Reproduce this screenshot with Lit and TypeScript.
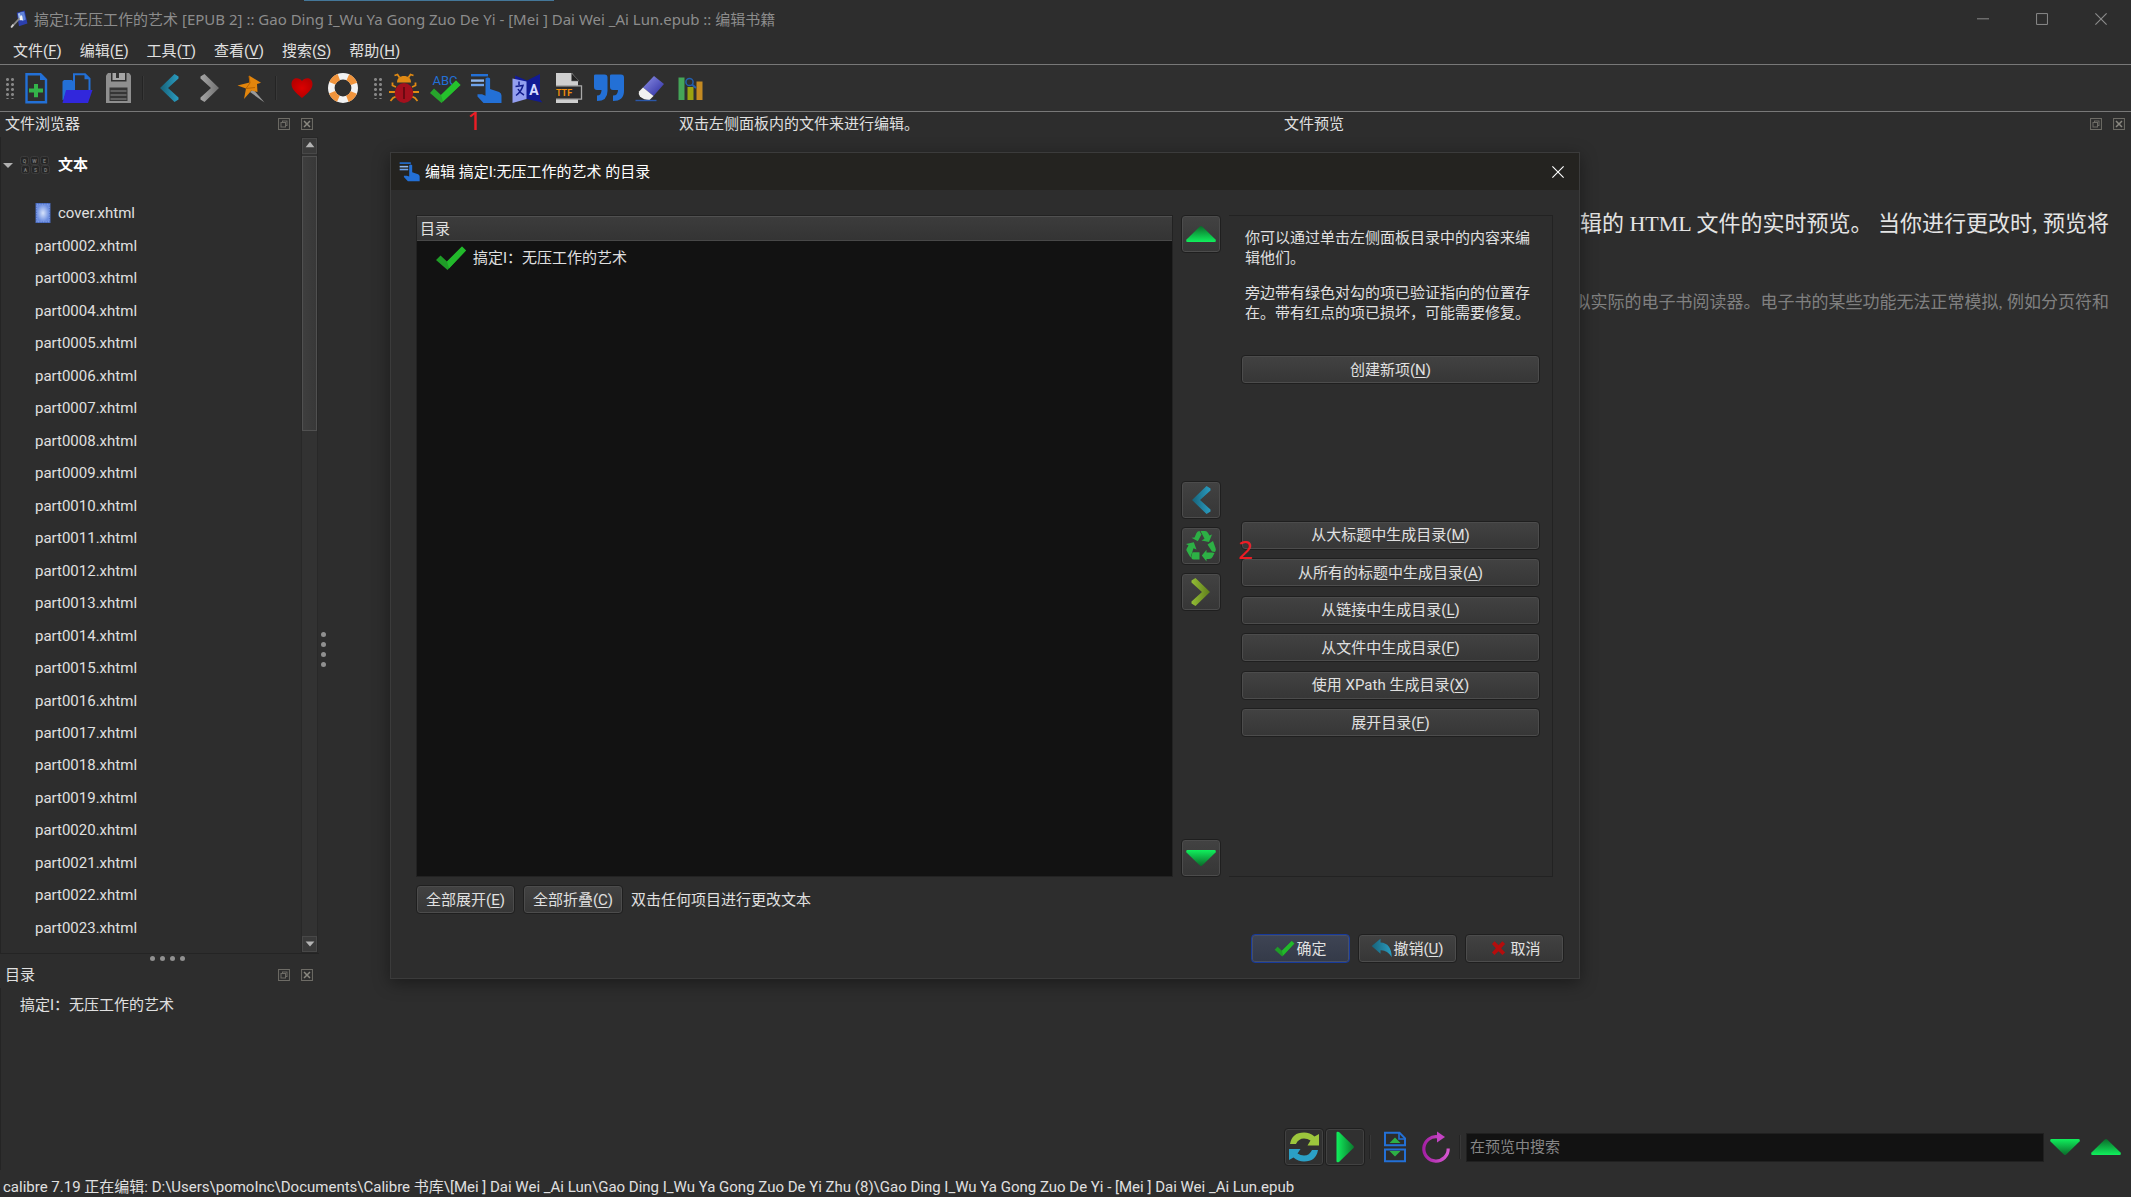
import { LitElement, html, svg, css, nothing, type TemplateResult } from "lit";
import { customElement, property, state } from "lit/decorators.js";
import { classMap } from "lit/directives/class-map.js";

const tocBars = svg`
  <g stroke-width="2.4"><path d="M1 3.2H18" stroke="#2370d6"/><path d="M1 8.6H14" stroke="#8fb6ec"/><path d="M1 13H14" stroke="#6ea2ea"/></g>
  <path d="M15.5 6.6a3 3 0 0 1 4.6 0V17l9 3q2.400 1 2.400 3.500V31H13.500L7.500 24.500v-2.200h4.500l3.500 1.500Z" fill="#2370d6"/>`;

const icons: Record<string, TemplateResult> = {
  newFile: svg`<path d="M6.500 2.200H20.500L26 7.700V30.300H6.500Z" fill="none" stroke="#2370d6" stroke-width="2.400"/><path d="M20 1.500V8h7Z" fill="#2370d6"/><path d="M14 12h4v4.600h5v4h-5v4.600h-4v-4.600H9v-4h5Z" fill="#34b44a"/>`,
  open: svg`<path d="M1.500 9.500L3 8h8l1.500 2v8H6L2.500 28H1.500Z" fill="#2370d6"/><path d="M13 18V2.200h11l4.500 4.500V18" fill="none" stroke="#2370d6" stroke-width="2"/><path d="M23.500 1.500V7.200h5.500Z" fill="#2370d6"/><path d="M5 18h26.500L27 31H1.500Z" fill="#3127dc"/>`,
  save: svg`<path d="M4 3.500L6 1H27L29 3.500V31H4Z" fill="#8f8f8f"/><path d="M9 1h15.500v8.500H9Z" fill="#2f2f2f"/><path d="M10.500 1H23v7H10.500Z" fill="#a6a6a6"/><path d="M14 1h3v5h-3Z" fill="#333"/><path d="M7.500 15.500h18V29h-18Z" fill="#353535"/><path d="M8.500 19h16M8.500 23h16M8.500 27h16" stroke="#8a8a8a" stroke-width="1.200"/>`,
  back: svg`<defs><linearGradient id="gb"><stop offset="0" stop-color="#176279"/><stop offset="1" stop-color="#2a9cc0"/></linearGradient></defs><path d="M21.500 2L25.500 4.500V6.500L15 16L25.500 25.500V27.500L21.500 30L7 16Z" fill="url(#gb)"/>`,
  forward: svg`<defs><linearGradient id="gf"><stop offset="0" stop-color="#a6a6a6"/><stop offset="1" stop-color="#707070"/></linearGradient></defs><path d="M10.500 2L6.500 4.500V6.500L17 16L6.500 25.500V27.500L10.500 30L25 16Z" fill="url(#gf)"/>`,
  next: svg`<defs><linearGradient id="gn"><stop offset="0" stop-color="#93bd35"/><stop offset="1" stop-color="#5f7d1c"/></linearGradient></defs><path d="M10.500 2L6.500 4.500V6.500L17 16L6.500 25.500V27.500L10.500 30L25 16Z" fill="url(#gn)"/>`,
  pin: svg`<path d="M18 17L29.500 30.500L15 20Z" fill="#9a9a9a"/><path d="M14 3.500L26 10.800L22 12L22.500 20L16.500 18.500L9 27L11 16.500L2.500 13.500L14.500 10.500Z" fill="#e2850c"/><path d="M14 4L15 11L11 16.500L20 15.500" fill="none" stroke="#b96400" stroke-width="1"/>`,
  heart: svg`<defs><radialGradient id="gh"><stop offset="0" stop-color="#dd0000"/><stop offset="1" stop-color="#b80000"/></radialGradient></defs><path d="M16 26C9.500 20.500 5.500 17 5.500 12C5.500 5.500 13 4.500 16 9C19 4.500 26.500 5.500 26.500 12C26.500 17 22.500 20.500 16 26Z" fill="url(#gh)"/>`,
  buoy: svg`<circle cx="16" cy="16" r="11.700" fill="none" stroke="#f2f2f2" stroke-width="6.600"/><circle cx="16" cy="16" r="11.700" fill="none" stroke="#f0943c" stroke-width="6.600" stroke-dasharray="9.190 9.190" stroke-dashoffset="-4.600"/>`,
  bug: svg`<g stroke="#e08a14" stroke-width="1.800" fill="none"><path d="M11.500 5.500L9.500 2.500L6.500 3.500M20.500 5.500L22.500 2.500L25.500 3.500M8 15L4.500 13.500V10.500M24 15L27.500 13.500V10.500M7 20H1M25 20h6M8 24.500L5 26L2.500 29M24 24.500L27 26L29.500 29"/></g><path d="M9 10.500C9 6 12 4 16 4s7 2 7 6.500Z" fill="#e08a14"/><ellipse cx="16" cy="21" rx="9.300" ry="10" fill="#a3101d"/><path d="M16 15v12" stroke="#5c0810" stroke-width="1.600"/>`,
  spell: svg`<text x="16" y="13" text-anchor="middle" font-size="13" font-family="Roboto, sans-serif" fill="#2370d6">ABC</text><path d="M1 21L5 16.500L12 23L27 8.500L31.500 13L12.500 31Z" fill="#27a52c"/><path d="M12 23L27 8.500L31.500 13L14 29.500Z" fill="#25c22c"/>`,
  toc: tocBars,
  translate: svg`<path d="M4 3.500L16 8.500L29 2V27.500L31.500 30.500L16 27L4 27Z" fill="#111a94"/><path d="M1.500 6.500L15.500 9.500V27L1.500 31Z" fill="#939ef0"/><path d="M8 9.500V13M4.500 14.500L12 13.500Q10 20 5 23.500M7 17Q9 21 13 23" fill="none" stroke="#121c8c" stroke-width="1.500"/><text x="23" y="23" text-anchor="middle" font-size="14" font-weight="700" font-family="Roboto, sans-serif" fill="#d6daff">A</text>`,
  ttf: svg`<path d="M4 1H20L26 9V14H4ZM4 27H26V31H4Z" fill="#cfcfcf"/><path d="M19.500 1L27 9H19.500Z" fill="#222" stroke="#777" stroke-width=".6"/><path d="M4 13.800H29.500V27.200H4" fill="#2b2b2b" stroke="#a9a9a9" stroke-width="1.300"/><text x="12" y="24" text-anchor="middle" font-size="9" font-weight="700" font-family="Roboto, sans-serif" fill="#ef8d0c">TTF</text>`,
  quote: svg`<path d="M1 3.500Q1 2.500 2.500 2.500H11.500Q14.500 2.500 14.500 5.500V19Q14.500 29 4 29V23.500Q8.500 23.500 8.500 18H4Q1 18 1 15Z" fill="#2370d6"/><path d="M17 3.500Q17 2.500 18.500 2.500H28Q31 2.500 31 5.500V19Q31 29 20 29V23.500Q25 23.500 25 18H20Q17 18 17 15Z" fill="#2370d6"/>`,
  eraser: svg`<defs><linearGradient id="ge" x1="0" y1="0" x2="1" y2="1"><stop offset="0" stop-color="#8d90e6"/><stop offset="1" stop-color="#2a2aa0"/></linearGradient></defs><path d="M20 4L30 12L19.500 24L9 15.500Z" fill="url(#ge)"/><path d="M9 15.500L19.500 24L15.500 28Q10 28 6 24.500Q4 22 5 19.500Z" fill="#f1f1f1"/><path d="M1.500 28.500h21" stroke="#2b57a8" stroke-width="1.400"/>`,
  chart: svg`<path d="M3.500 5.500h6V28h-6Z" fill="#45a558"/><path d="M12.500 15h6V28h-6Z" fill="#9aa310"/><path d="M21.500 9.500h6V28h-6Z" fill="#c48a22"/><circle cx="14.500" cy="10" r="3.600" fill="none" stroke="#235fae" stroke-width="1.500"/><path d="M17 12.500L21 16" stroke="#235fae" stroke-width="2"/>`,
  up: svg`<defs><linearGradient id="gu" x1="0" y1="0" x2="0" y2="1"><stop offset="0" stop-color="#0b6a2a"/><stop offset="1" stop-color="#10f05c"/></linearGradient></defs><path d="M14.800 8.500Q16 7.500 17.200 8.500L30.500 21.500Q31.500 24 29.500 24H2.500Q.5 24 1.500 21.500Z" fill="url(#gu)"/>`,
  down: svg`<defs><linearGradient id="gd" x1="0" y1="1" x2="0" y2="0"><stop offset="0" stop-color="#0b6a2a"/><stop offset="1" stop-color="#10f05c"/></linearGradient></defs><path d="M14.800 23.500Q16 24.500 17.200 23.500L30.500 10.500Q31.500 8 29.500 8H2.500Q.5 8 1.500 10.500Z" fill="url(#gd)"/>`,
  recycle: svg`<g fill="#2db045"><path d="M11.500 3Q12.500 1 14.500 1L16.500 4.500L12.800 11.200L6.500 7.800L9.500 7.500Z"/><path d="M15.500 1H20Q22 1 23 3L24.500 5.500L27 4.500L24 12L16.500 10.500L19.500 8.800Z"/><path d="M22.500 14.500L28 11L30.500 18Q31.500 20 30 22L27 21.500Z"/><path d="M29.500 23L27.500 27Q26.500 29 24 29H21.500V31.500L16.800 25.500L21.500 19.800V22.500H27Z"/><path d="M14.500 22.300V29.500H8.500Q6.500 29.500 6.200 27L7.500 22.300Z"/><path d="M5.500 27.500L1.500 20.500Q1 19.500 2 18L3.500 15.500L1 14L8.800 12.300L11.500 19.500L8.500 18.300Z"/></g>`,
  refresh: svg`<path d="M2 13Q4 1.500 16 1.500Q22 1.500 26.500 5.500L31 3V14.500H19.500L22.500 9.500Q19.500 7.500 16 7.500Q10.500 7.500 8 13Z" fill="#9cc63c"/><path d="M30 19Q28 30.500 16 30.500Q10 30.500 5.500 26.500L1 29V18H12.500L9.500 22.500Q12.500 24.500 16 24.500Q21.500 24.500 24 19Z" fill="#2ba0c6"/>`,
  play: svg`<defs><linearGradient id="gp"><stop offset="0" stop-color="#10f05c"/><stop offset="1" stop-color="#0b7a2e"/></linearGradient></defs><path d="M7.500 2Q7.500 0 10 1L24.500 15Q25.500 16 24.500 17L10 31Q7.500 32 7.500 30Z" fill="url(#gp)"/>`,
  split: svg`<path d="M6 1.800H20.500L26 7.300V14.200H6ZM6 18.500H26V30.300H6Z" fill="none" stroke="#2370d6" stroke-width="2"/><path d="M20 2V8h6" fill="none" stroke="#2370d6" stroke-width="1.600"/><path d="M16 6.500L21.500 12h-11ZM16 25.500L21.500 20h-11Z" fill="#2db045"/>`,
  reload: svg`<defs><linearGradient id="gr"><stop offset="0" stop-color="#a520a5"/><stop offset="1" stop-color="#d657d0"/></linearGradient></defs><path d="M18 5.800A12.200 12.200 0 1 0 28.200 17.500" fill="none" stroke="url(#gr)" stroke-width="3.200"/><path d="M17 .500L25 6L17 11.500Z" fill="#c443c4"/>`,
  check: svg`<path d="M1 18L5.500 13.500L12 19.500L27 4.500L31 8.500L12.500 28Z" fill="#1f9c27"/><path d="M12 19.500L27 4.500L31 8.500L14 26.500Z" fill="#22b92b"/>`,
  undo: svg`<defs><linearGradient id="gz"><stop offset="0" stop-color="#176279"/><stop offset="1" stop-color="#2a9cc0"/></linearGradient></defs><path d="M1 12L14.500 1V7Q31 8 31.500 29Q25 18 14.500 18.500V24Z" fill="url(#gz)"/>`,
  cross: svg`<path d="M6 9L10 5L16 11L22 5L26 9L20 15.500L26 22L22 26L16 20L10 26L6 22L12 15.500Z" fill="#b50d0d"/>`,
  app: svg`<path d="M12 5L26 1L31 24L16 29Z" fill="#2b3fae"/><path d="M14 6L23 3.500L25 13L16 18Z" fill="#a9c4ea"/><path d="M17 5L25 3L28 17L22 20Z" fill="#5f82d8"/><path d="M18 12q2-5 4 0l1 6h-6Z" fill="#f4f4f4"/><path d="M3 30L17 15" stroke="#8c8c8c" stroke-width="3"/><path d="M2 31L6 26" stroke="#cfcfcf" stroke-width="3"/>`,
  cover: svg`<defs><radialGradient id="gc"><stop offset="0" stop-color="#d5e2fb"/><stop offset="1" stop-color="#6d8ee0"/></radialGradient></defs><path d="M4 0H28V32H4Z" fill="#4a6cc0"/><path d="M6 2H26V30H6Z" fill="url(#gc)" stroke="#86a2ea" stroke-dasharray="2 2" stroke-width="1.500"/>`,
  float: svg`<path d="M1.500 1.500H30.500V30.500H1.500Z" fill="none" stroke="#6e6c66" stroke-width="2.700"/><path d="M8 12h12v12H8ZM12 12V8h12v12h-4" fill="none" stroke="#6e6c66" stroke-width="2.700"/>`,
  shut: svg`<path d="M1.500 1.500H30.500V30.500H1.500Z" fill="none" stroke="#6e6c66" stroke-width="2.700"/><path d="M8 8L24 24M24 8L8 24" stroke="#8a8880" stroke-width="4"/>`,
  minimize: svg`<path d="M0 15.500H32" stroke="#8c8c8c" stroke-width="2.600"/>`,
  maximize: svg`<path d="M1.500 1.500H30.500V30.500H1.500Z" fill="none" stroke="#8c8c8c" stroke-width="2.600"/>`,
  close: svg`<path d="M1 1L31 31M31 1L1 31" stroke="currentColor" stroke-width="3"/>`,
  arrowUp: svg`<path d="M16 2L30 20H2Z" fill="#b4b4b4"/>`,
  arrowDown: svg`<path d="M16 24L30 8H2Z" fill="#b4b4b4"/>`,
};

@customElement("ui-icon")
export class UiIcon extends LitElement {
  @property() name = "";
  static styles = css`
    :host { display: block; width: 32px; height: 32px; flex: none; }
    .glyph { display: block; width: 100%; height: 100%; }
  `;
  render() {
    return html`<svg class="glyph" viewBox="0 0 32 32" aria-hidden="true">${icons[this.name]}</svg>`;
  }
}

interface Caption { text: string; key?: string; }

const caption = (c: Caption) => html`<span>${c.text}${c.key ? html`(<u>${c.key}</u>)` : nothing}</span>`;

const menus: Caption[] = [
  { text: "文件", key: "F" }, { text: "编辑", key: "E" }, { text: "工具", key: "T" },
  { text: "查看", key: "V" }, { text: "搜索", key: "S" }, { text: "帮助", key: "H" },
];

const mainTools: [string, string][] = [
  ["newFile", "新建文件"], ["open", "打开"], ["save", "保存"], ["", ""],
  ["back", "后退"], ["forward", "前进"], ["pin", "书签"], ["", ""],
  ["heart", "捐赠"], ["buoy", "帮助"],
];

const editTools: [string, string][] = [
  ["bug", "检查书籍"], ["spell", "拼写检查"], ["toc", "编辑目录"], ["translate", "翻译"],
  ["ttf", "管理字体"], ["quote", "智能标点"], ["eraser", "清理"], ["chart", "报告"],
];

const files = ["cover.xhtml", ...Array.from({ length: 22 }, (_, i) => `part${String(i + 2).padStart(4, "0")}.xhtml`)];

const generators: Caption[] = [
  { text: "从大标题中生成目录", key: "M" }, { text: "从所有的标题中生成目录", key: "A" },
  { text: "从链接中生成目录", key: "L" }, { text: "从文件中生成目录", key: "F" },
  { text: "使用 XPath 生成目录", key: "X" }, { text: "展开目录", key: "F" },
];

@customElement("app-root")
export class AppRoot extends LitElement {
  @state() private query = "";

  static styles = css`
    :host {
      display: block;
      color: #e0e0e0;
      background: #2d2d2d;
      font: 15px/20px Roboto, "Noto Sans CJK SC", sans-serif;
    }
    * { box-sizing: border-box; }
    button { font: inherit; color: inherit; background: none; border: 0; padding: 0; margin: 0; }
    h2, p, ul { margin: 0; padding: 0; font-size: 15px; font-weight: 400; list-style: none; }
    u { text-underline-offset: 2px; text-decoration-thickness: 1px; }
    .app { position: relative; display: flex; flex-direction: column; height: 100vh; min-height: 900px; overflow: hidden; }
    .grow { flex: 1; }

    .titlebar { display: flex; align-items: center; height: 38px; padding: 0 8px 0 10px; gap: 6px; color: #8c8c8c; font-family: "Noto Sans", "Noto Sans CJK SC", sans-serif; }
    .app-icon { width: 18px; height: 18px; }
    .loading { position: absolute; top: 0; left: 304px; width: 250px; height: 1px; background: #447799; }
    .window-buttons { display: flex; gap: 14px; }
    .window-button { display: grid; place-items: center; width: 45px; height: 30px; }
    .window-button ui-icon { width: 12px; height: 12px; }

    .menubar { display: flex; height: 26px; padding: 1px 0 0 4px; }
    .menu { height: 24px; padding: 0 9px; }

    .toolbars { display: flex; height: 48px; border-top: 1px solid #787878; border-bottom: 1px solid #787878; background: #2f2f2f; }
    .toolbar { display: flex; align-items: center; }
    .toolbar + .toolbar { margin-left: 5px; }
    .grip { width: 10px; height: 22px; margin: 0 0 0 5px; background: radial-gradient(circle, #868686 1px, transparent 2px) 0 0 / 5px 5px; }
    .tool { display: grid; place-items: center; width: 41px; height: 44px; }
    .rule { width: 2px; height: 24px; margin: 0 4px; border-left: 1px solid #242424; border-right: 1px solid #383838; }

    .workspace { display: flex; flex: 1; min-height: 0; }
    .side { display: flex; flex-direction: column; width: 319px; flex: none; }
    .dock-title { display: flex; align-items: center; height: 25px; padding: 0 6px 1px 5px; }
    .dock-title h2 { flex: 1; }
    .dock-buttons { display: flex; gap: 11px; }
    .dock-button ui-icon { width: 12px; height: 12px; }
    .tree { display: flex; flex: 1; min-height: 0; border-left: 1px solid #242424; border-bottom: 1px solid #242424; }
    .tree-body { display: flex; flex-direction: column; flex: 1; padding: 16px 0 9px; }
    .folder { display: flex; align-items: center; height: 24px; margin-bottom: 20px; padding-left: 2px; font-weight: 700; color: #fff; }
    .expander { width: 0; border: 5px solid transparent; border-top-color: #b0b0b0; border-bottom: 0; }
    .keys { width: 30px; height: 20px; margin: 0 8px 0 7px; }
    .files { display: flex; flex-direction: column; flex: 1; }
    .file { display: flex; flex: 1; align-items: center; padding-left: 34px; gap: 5px; }
    .file ui-icon { width: 20px; height: 20px; margin-left: -2px; }
    .scrollbar { display: flex; flex-direction: column; width: 17px; margin-right: 1px; border: 1px solid #282828; background: #323232; }
    .scroll-button { display: grid; place-items: center; height: 16px; border: 1px solid #484848; background: #3a3a3a; }
    .scroll-button ui-icon { width: 10px; height: 10px; }
    .thumb { height: 275px; margin: 2px 0 auto; border: 1px solid #505050; background: linear-gradient(90deg, #3e3e3e, #383838); }
    .handle { display: flex; align-items: center; justify-content: center; gap: 5px; }
    .handle.across { height: 9px; padding-left: 16px; }
    .handle.along { flex-direction: column; width: 9px; padding-top: 16px; }
    .dot { width: 5px; height: 5px; border-radius: 50%; background: #909090; }
    .outline { height: 182px; border-left: 1px solid #242424; padding: 7px 19px; }

    .editor { flex: 1; text-align: center; padding: 2px 9px 0 0; }
    .preview { display: flex; flex-direction: column; width: 852px; flex: none; overflow: hidden; }
    .preview-body { display: flex; flex-direction: column; align-items: flex-end; flex: 1; padding: 72px 22px 0 0; font-family: "Liberation Serif", "Noto Sans CJK SC", serif; white-space: nowrap; }
    .preview-body .lead { font-size: 22px; line-height: 30px; margin-bottom: 52px; color: #e4e4e4; }
    .preview-body .note { font-size: 17px; line-height: 24px; color: #808080; }
    .preview-bar { display: flex; align-items: center; height: 42px; padding: 0 5px; margin-bottom: 2px; }
    .push { display: grid; place-items: center; height: 29px; border: 1px solid #1f1f1f; border-radius: 4px; background: linear-gradient(#424242, #363636); box-shadow: inset 0 0 0 1px #4c4c4c; }
    .push.square { width: 40px; height: 38px; }
    .preview-bar .push { background: #303030; box-shadow: inset 0 0 0 1px #424242; margin-right: 1px; }
    .preview-bar .tool { height: 38px; }
    .preview-bar .rule { margin: 0 3px; }
    .search { flex: 1; min-width: 0; height: 29px; margin-left: 2px; padding: 0 3px; border: 1px solid #202020; background: #121212; color: #e0e0e0; font: inherit; outline: 0; }
    .search::placeholder { color: #868686; opacity: 1; }

    .status { height: 27px; padding: 6px 3px 0; line-height: 22px; white-space: nowrap; }

    .dialog { position: absolute; top: 152px; left: 390px; right: 551px; bottom: 218px; display: flex; flex-direction: column; border: 1px solid #3b3b3b; background: #2d2d2d; box-shadow: 0 4px 16px #00000066; }
    .dialog-title { display: flex; align-items: center; height: 37px; padding: 0 15px 0 8px; gap: 5px; background: #242320; color: #fff; }
    .dialog-title h2 { flex: 1; }
    .dialog-title .glyph { width: 21px; height: 21px; }
    .dialog-close ui-icon { width: 12px; height: 12px; }
    .dialog-main { display: flex; flex: 1; min-height: 0; gap: 8px; padding: 25px 26px 8px 25px; }
    .contents { flex: 1; border: 1px solid #222; background: #121212; }
    .contents-head { height: 25px; padding: 1px 3px; border-top: 1px solid #505050; border-bottom: 1px solid #484848; background: linear-gradient(#3c3c3c, #343434); line-height: 22px; }
    .entry { display: flex; align-items: center; height: 33px; padding-left: 18px; gap: 6px; }
    .mover { display: flex; flex-direction: column; justify-content: space-between; }
    .mover-group { display: flex; flex-direction: column; gap: 8px; }
    .actions { display: flex; flex-direction: column; width: 324px; padding: 12px 12px 2px; border: 1px solid #222; border-left: 0; }
    .actions p { padding: 0 0 0 4px; margin-bottom: 15px; }
    .create { margin-top: 17px; }
    .generate { display: flex; flex-direction: column; justify-content: space-between; height: 217px; }
    .hint-row { display: flex; align-items: center; gap: 8px; padding-left: 25px; }
    .compact { padding: 0 9px; }
    .dialog-buttons { display: flex; justify-content: flex-end; gap: 8px; padding: 20px 15px 15px; }
    .choice { display: flex; align-items: center; justify-content: center; width: 99px; gap: 1px; }
    .choice ui-icon { width: 21px; height: 21px; }
    .choice.default { border-color: #173a9c; background: linear-gradient(#3e4454, #343a48); box-shadow: inset 0 0 0 1px #485064; }
    .callout { position: absolute; font: 26px/30px "Noto Sans", sans-serif; color: #ed1c24; }
    .first { left: 467px; top: 105px; }
    .second { left: 1238px; top: 534px; }
  `;

  private tools(items: [string, string][], label: string) {
    return html`<div class="toolbar" role="toolbar" aria-label=${label}>
      <span class="grip"></span>
      ${items.map(([name, title]) => name
        ? html`<button class="tool" aria-label=${title}><ui-icon name=${name}></ui-icon></button>`
        : html`<span class="rule"></span>`)}
    </div>`;
  }

  private dockTitle(text: string) {
    return html`<div class="dock-title"><h2>${text}</h2>
      <div class="dock-buttons">
        <button class="dock-button" aria-label="浮动"><ui-icon name="float"></ui-icon></button>
        <button class="dock-button" aria-label="关闭"><ui-icon name="shut"></ui-icon></button>
      </div></div>`;
  }

  private handle(direction: string) {
    return html`<div class=${classMap({ handle: true, [direction]: true })}>
      <i class="dot"></i><i class="dot"></i><i class="dot"></i><i class="dot"></i></div>`;
  }

  private square(name: string, title: string) {
    return html`<button class="push square" aria-label=${title}><ui-icon name=${name}></ui-icon></button>`;
  }

  private keyboard() {
    return html`<svg class="keys" viewBox="0 0 30 20" aria-hidden="true">
      ${["Q", "W", "E", "A", "S", "D"].map((k, i) => {
        const x = (i % 3) * 10 + (i > 2 ? 1 : 0), y = i > 2 ? 10 : 1;
        return svg`<rect x=${x + 0.5} y=${y + 0.5} width="8" height="8" rx="2" fill="#262626" stroke="#3c3c3c"></rect>
          <text x=${x + 4.5} y=${y + 6.5} text-anchor="middle" font-size="5" fill="#787878">${k}</text>`;
      })}</svg>`;
  }

  private dialog() {
    return html`<section class="dialog" role="dialog" aria-label="编辑目录">
      <header class="dialog-title"><ui-icon class="glyph" name="toc"></ui-icon>
        <h2>编辑 搞定I:无压工作的艺术 的目录</h2>
        <button class="dialog-close" aria-label="关闭"><ui-icon name="close"></ui-icon></button>
      </header>
      <div class="dialog-main">
        <div class="contents">
          <div class="contents-head">目录</div>
          <ul><li class="entry"><ui-icon name="check"></ui-icon>搞定I：无压工作的艺术</li></ul>
        </div>
        <div class="mover">
          ${this.square("up", "上移")}
          <div class="mover-group">
            ${this.square("back", "减少缩进")}${this.square("recycle", "移除")}${this.square("next", "增加缩进")}
          </div>
          ${this.square("down", "下移")}
        </div>
        <div class="actions">
          <p>你可以通过单击左侧面板目录中的内容来编辑他们。</p>
          <p>旁边带有绿色对勾的项已验证指向的位置存在。带有红点的项已损坏，可能需要修复。</p>
          <button class="push create">${caption({ text: "创建新项", key: "N" })}</button>
          <span class="grow"></span>
          <div class="generate">${generators.map((g) => html`<button class="push">${caption(g)}</button>`)}</div>
          <span class="grow"></span>
        </div>
      </div>
      <div class="hint-row">
        <button class="push compact">${caption({ text: "全部展开", key: "E" })}</button>
        <button class="push compact">${caption({ text: "全部折叠", key: "C" })}</button>
        <span>双击任何项目进行更改文本</span>
      </div>
      <footer class="dialog-buttons">
        <button class="push choice default"><ui-icon name="check"></ui-icon>确定</button>
        <button class="push choice"><ui-icon name="undo"></ui-icon>${caption({ text: "撤销", key: "U" })}</button>
        <button class="push choice"><ui-icon name="cross"></ui-icon>取消</button>
      </footer>
    </section>`;
  }

  render() {
    return html`<div class="app">
      <span class="loading"></span>
      <header class="titlebar">
        <ui-icon class="app-icon" name="app"></ui-icon>
        <span class="grow">搞定I:无压工作的艺术 [EPUB 2] :: Gao Ding I_Wu Ya Gong Zuo De Yi - [Mei ] Dai Wei _Ai Lun.epub :: 编辑书籍</span>
        <div class="window-buttons">
          <button class="window-button" aria-label="最小化"><ui-icon name="minimize"></ui-icon></button>
          <button class="window-button" aria-label="最大化"><ui-icon name="maximize"></ui-icon></button>
          <button class="window-button" aria-label="关闭"><ui-icon name="close"></ui-icon></button>
        </div>
      </header>
      <nav class="menubar">${menus.map((m) => html`<button class="menu">${caption(m)}</button>`)}</nav>
      <div class="toolbars">${this.tools(mainTools, "书籍")}${this.tools(editTools, "工具")}</div>
      <main class="workspace">
        <aside class="side">
          ${this.dockTitle("文件浏览器")}
          <div class="tree">
            <div class="tree-body">
              <div class="folder"><i class="expander"></i>${this.keyboard()}文本</div>
              <ul class="files">${files.map((f, i) => html`<li class="file">
                ${i === 0 ? html`<ui-icon name="cover"></ui-icon>` : nothing}${f}</li>`)}</ul>
            </div>
            <div class="scrollbar">
              <button class="scroll-button" aria-label="向上滚动"><ui-icon name="arrowUp"></ui-icon></button>
              <div class="thumb"></div>
              <button class="scroll-button" aria-label="向下滚动"><ui-icon name="arrowDown"></ui-icon></button>
            </div>
          </div>
          ${this.handle("across")}
          ${this.dockTitle("目录")}
          <div class="outline">搞定I：无压工作的艺术</div>
        </aside>
        ${this.handle("along")}
        <section class="editor">双击左侧面板内的文件来进行编辑。</section>
        <section class="preview">
          ${this.dockTitle("文件预览")}
          <div class="preview-body">
            <p class="lead">辑的 HTML 文件的实时预览。 当你进行更改时, 预览将</p>
            <p class="note">拟实际的电子书阅读器。电子书的某些功能无法正常模拟, 例如分页符和</p>
          </div>
          <div class="preview-bar">
            ${this.square("refresh", "刷新预览")}${this.square("play", "自动同步")}
            <span class="rule"></span>
            <button class="tool" aria-label="拆分文件"><ui-icon name="split"></ui-icon></button>
            <button class="tool" aria-label="重新载入"><ui-icon name="reload"></ui-icon></button>
            <span class="rule"></span>
            <input class="search" type="text" aria-label="在预览中搜索" placeholder="在预览中搜索" .value=${this.query}
              @input=${(e: Event) => (this.query = (e.target as HTMLInputElement).value)} />
            <button class="tool" aria-label="查找下一个"><ui-icon name="down"></ui-icon></button>
            <button class="tool" aria-label="查找上一个"><ui-icon name="up"></ui-icon></button>
          </div>
        </section>
      </main>
      <footer class="status">calibre 7.19 正在编辑: D:\\Users\\pomoInc\\Documents\\Calibre 书库\\[Mei ] Dai Wei _Ai Lun\\Gao Ding I_Wu Ya Gong Zuo De Yi Zhu (8)\\Gao Ding I_Wu Ya Gong Zuo De Yi - [Mei ] Dai Wei _Ai Lun.epub</footer>
      ${this.dialog()}
      <span class="callout first">1</span>
      <span class="callout second">2</span>
    </div>`;
  }
}
